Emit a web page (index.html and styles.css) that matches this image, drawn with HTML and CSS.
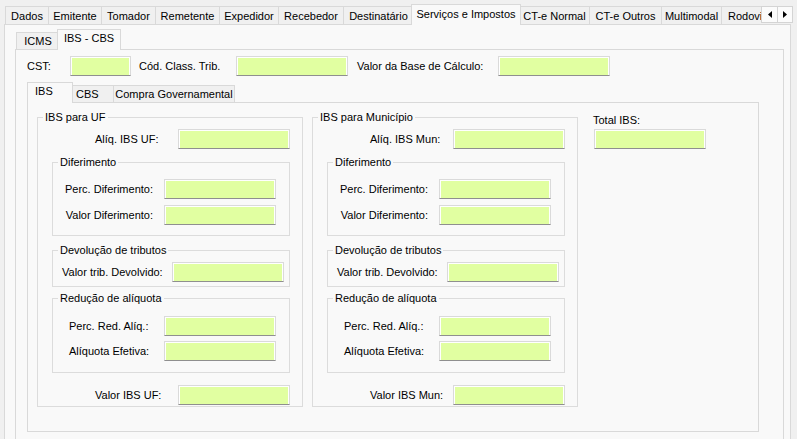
FILE: index.html
```html
<!DOCTYPE html>
<html lang="pt-BR">
<head>
<meta charset="utf-8">
<title>Serviços e Impostos</title>
<link rel="stylesheet" href="styles.css">
</head>
<body>
<div class="app">
  <div class="tabctl outer">
    <div class="strip strip-outer">
      <div class="tab w44">Dados</div>
      <div class="tab w54">Emitente</div>
      <div class="tab w55">Tomador</div>
      <div class="tab w65">Remetente</div>
      <div class="tab w60">Expedidor</div>
      <div class="tab w66">Recebedor</div>
      <div class="tab w71">Destinatário</div>
      <div class="tab sel w110">Serviços e Impostos</div>
      <div class="tab w71">CT-e Normal</div>
      <div class="tab w73">CT-e Outros</div>
      <div class="tab w61">Multimodal</div>
      <div class="tab clip">Rodoviário</div>
      <div class="scroller">
        <span class="sbtn"><svg width="4" height="7" viewBox="0 0 4 7"><path d="M4 0 L0 3.5 L4 7 Z" fill="#000"/></svg></span>
        <span class="sbtn"><svg width="4" height="7" viewBox="0 0 4 7"><path d="M0 0 L4 3.5 L0 7 Z" fill="#000"/></svg></span>
      </div>
    </div>
    <div class="page page-outer">
      <div class="tabctl inner">
        <div class="strip strip-inner">
          <div class="tab itab w44">ICMS</div>
          <div class="tab itab sel w64">IBS - CBS</div>
        </div>
        <div class="page page-inner">
          <div class="cst-row">
            <span class="lbl l-cst">CST:</span>
            <span class="input in-cst"></span>
            <span class="lbl l-cod">Cód. Class. Trib.</span>
            <span class="input"></span>
            <span class="lbl l-base">Valor da Base de Cálculo:</span>
            <span class="input"></span>
          </div>

          <div class="tabctl ibs">
            <div class="strip strip-ibs">
              <div class="tab itab sel first w46">IBS</div>
              <div class="tab itab left w43">CBS</div>
              <div class="tab itab w122">Compra Governamental</div>
            </div>
            <div class="page page-ibs">
              <div class="group main">
                <div class="legend">IBS para UF</div>
                <div class="row r-top">
                  <span class="lbl l-main">Alíq. IBS UF:</span>
                  <span class="input"></span>
                </div>
                <div class="group sub sub-dif">
                  <div class="legend">Diferimento</div>
                  <div class="row r-dif1">
                    <span class="lbl l-dif">Perc. Diferimento:</span>
                    <span class="input"></span>
                  </div>
                  <div class="row r-dif2">
                    <span class="lbl l-dif">Valor Diferimento:</span>
                    <span class="input"></span>
                  </div>
                </div>
                <div class="group sub sub-dev">
                  <div class="legend">Devolução de tributos</div>
                  <div class="row r-dev">
                    <span class="lbl l-dev">Valor trib. Devolvido:</span>
                    <span class="input"></span>
                  </div>
                </div>
                <div class="group sub sub-red">
                  <div class="legend">Redução de alíquota</div>
                  <div class="row r-red1">
                    <span class="lbl l-red">Perc. Red. Alíq.:</span>
                    <span class="input"></span>
                  </div>
                  <div class="row r-red2">
                    <span class="lbl l-red">Alíquota Efetiva:</span>
                    <span class="input"></span>
                  </div>
                </div>
                <div class="row r-bottom">
                  <span class="lbl l-main">Valor IBS UF:</span>
                  <span class="input"></span>
                </div>
              </div>

              <div class="group main">
                <div class="legend">IBS para Município</div>
                <div class="row r-top">
                  <span class="lbl l-main">Alíq. IBS Mun:</span>
                  <span class="input"></span>
                </div>
                <div class="group sub sub-dif">
                  <div class="legend">Diferimento</div>
                  <div class="row r-dif1">
                    <span class="lbl l-dif">Perc. Diferimento:</span>
                    <span class="input"></span>
                  </div>
                  <div class="row r-dif2">
                    <span class="lbl l-dif">Valor Diferimento:</span>
                    <span class="input"></span>
                  </div>
                </div>
                <div class="group sub sub-dev">
                  <div class="legend">Devolução de tributos</div>
                  <div class="row r-dev">
                    <span class="lbl l-dev">Valor trib. Devolvido:</span>
                    <span class="input"></span>
                  </div>
                </div>
                <div class="group sub sub-red">
                  <div class="legend">Redução de alíquota</div>
                  <div class="row r-red1">
                    <span class="lbl l-red">Perc. Red. Alíq.:</span>
                    <span class="input"></span>
                  </div>
                  <div class="row r-red2">
                    <span class="lbl l-red">Alíquota Efetiva:</span>
                    <span class="input"></span>
                  </div>
                </div>
                <div class="row r-bottom">
                  <span class="lbl l-main">Valor IBS Mun:</span>
                  <span class="input"></span>
                </div>
              </div>

              <div class="total">
                <div class="total-lbl">Total IBS:</div>
                <span class="input total-in"></span>
              </div>
            </div>
          </div>
        </div>
      </div>
    </div>
  </div>
</div>
</body>
</html>
```

FILE: styles.css
```css
* { box-sizing: border-box; }

html, body {
  margin: 0;
  padding: 0;
}

body {
  background: #f0f0f0;
  font-family: "Liberation Sans", Arial, sans-serif;
  font-size: 11px;
  color: #000;
  overflow: hidden;
}

.app {
  width: 797px;
  height: 439px;
  overflow: hidden;
  padding-left: 4px;
}

/* ---------- tab controls ---------- */
.tabctl.outer { width: 787px; }

.strip {
  display: flex;
  align-items: flex-end;
}

.strip-outer { height: 24px; padding-left: 1px; }
.strip-inner { height: 20px; padding-left: 1px; }
.strip-ibs { height: 20px; }

.tab {
  flex: none;
  height: 18px;
  margin-right: -1px;
  padding-top: 3px;
  line-height: 13px;
  text-align: center;
  white-space: nowrap;
  background: #f0f0f0;
  border: 1px solid #d9d9d9;
  border-bottom: none;
}

.tab.sel {
  position: relative;
  z-index: 2;
  height: 21px;
  margin-left: -2px;
  margin-right: -2px;
  margin-bottom: -1px;
  background: #f9f9f9;
}

.tab.itab { height: 17px; padding-top: 2px; }
.tab.itab.sel { height: 21px; padding-top: 2px; }
.tab.sel.first { margin-left: 0; text-align: left; padding-left: 7px; }
.tab.left { text-align: left; padding-left: 4px; }

.tab.clip {
  width: 40px;
  margin-right: 0;
  border-right: none;
  overflow: hidden;
  text-align: left;
  padding-left: 6px;
}

.w43 { width: 43px; }
.w44 { width: 44px; }
.w46 { width: 46px; }
.w54 { width: 54px; }
.w55 { width: 55px; }
.w60 { width: 60px; }
.w61 { width: 61px; }
.w64 { width: 64px; }
.w65 { width: 65px; }
.w66 { width: 66px; }
.w71 { width: 71px; }
.w73 { width: 73px; }
.w110 { width: 110px; }
.w122 { width: 122px; }

.scroller {
  flex: none;
  align-self: flex-start;
  margin-top: 6px;
  display: flex;
  height: 17px;
  border: 1px solid #d4d4d4;
  background: #fbfbfb;
}

.sbtn {
  width: 15px;
  display: flex;
  align-items: center;
  justify-content: center;
}

.sbtn + .sbtn { border-left: 1px solid #d4d4d4; }

.page {
  background: #f9f9f9;
  border: 1px solid #d9d9d9;
}

.page-outer {
  height: 440px;
  padding: 0 6px 0 10px;
}

.tabctl.inner { padding-top: 4px; }

.page-inner {
  height: 420px;
  padding-top: 6px;
  padding-left: 11px;
}

/* ---------- CST row ---------- */
.cst-row {
  display: flex;
  align-items: center;
  height: 20px;
}

.lbl {
  flex: none;
  line-height: 13px;
  white-space: nowrap;
}

.l-cst { width: 43px; }
.l-cod { width: 97px; margin-left: 8px; }
.l-base { width: 141px; margin-left: 9px; }

.input {
  flex: none;
  display: block;
  width: 112px;
  height: 20px;
  background: #e1ffa1;
  border: 1px solid #dadada;
  border-bottom-color: #8f8f8f;
  box-shadow: inset 1px 1px 0 #ffffff, inset -1px 0 0 #ffffff;
}

.input.in-cst { width: 61px; }

/* ---------- IBS tab control ---------- */
.tabctl.ibs {
  width: 732px;
  margin-top: 6px;
}

.page-ibs {
  height: 330px;
  display: flex;
  align-items: flex-start;
  padding-left: 9px;
  gap: 9px;
}

/* ---------- group boxes ---------- */
.group {
  border: 1px solid #dcdcdc;
}

.legend {
  width: fit-content;
  margin: -8px 0 0 5px;
  padding: 0 2px;
  line-height: 14px;
  background: #f9f9f9;
  white-space: nowrap;
}

.group.main {
  flex: none;
  width: 266px;
  margin-top: 14px;
  padding-bottom: 1px;
}

.group.sub {
  margin-left: 14px;
  margin-right: 12px;
}

.row {
  display: flex;
  align-items: center;
  height: 20px;
}

.r-top { margin-top: 5px; padding-left: 57px; }
.r-bottom { margin-top: 12px; padding-left: 57px; }
.l-main { width: 83px; }

.sub-dif { margin-top: 13px; padding-bottom: 10px; }
.r-dif1 { margin-top: 10px; }
.r-dif2 { margin-top: 6px; }
.l-dif { width: 100px; margin-right: 11px; text-align: right; }

.sub-dev { margin-top: 14px; padding-bottom: 4px; }
.r-dev { margin-top: 5px; padding-left: 9px; }
.l-dev { width: 110px; }

.sub-red { margin-top: 11px; padding-bottom: 11px; }
.r-red1 { margin-top: 11px; padding-left: 16px; }
.r-red2 { margin-top: 5px; padding-left: 16px; }
.l-red { width: 95px; }

/* ---------- total ---------- */
.total {
  flex: none;
  margin-left: 6px;
  margin-top: 11px;
}

.total-lbl { line-height: 13px; }

.total-in {
  margin-top: 2px;
  margin-left: 1px;
}
```
